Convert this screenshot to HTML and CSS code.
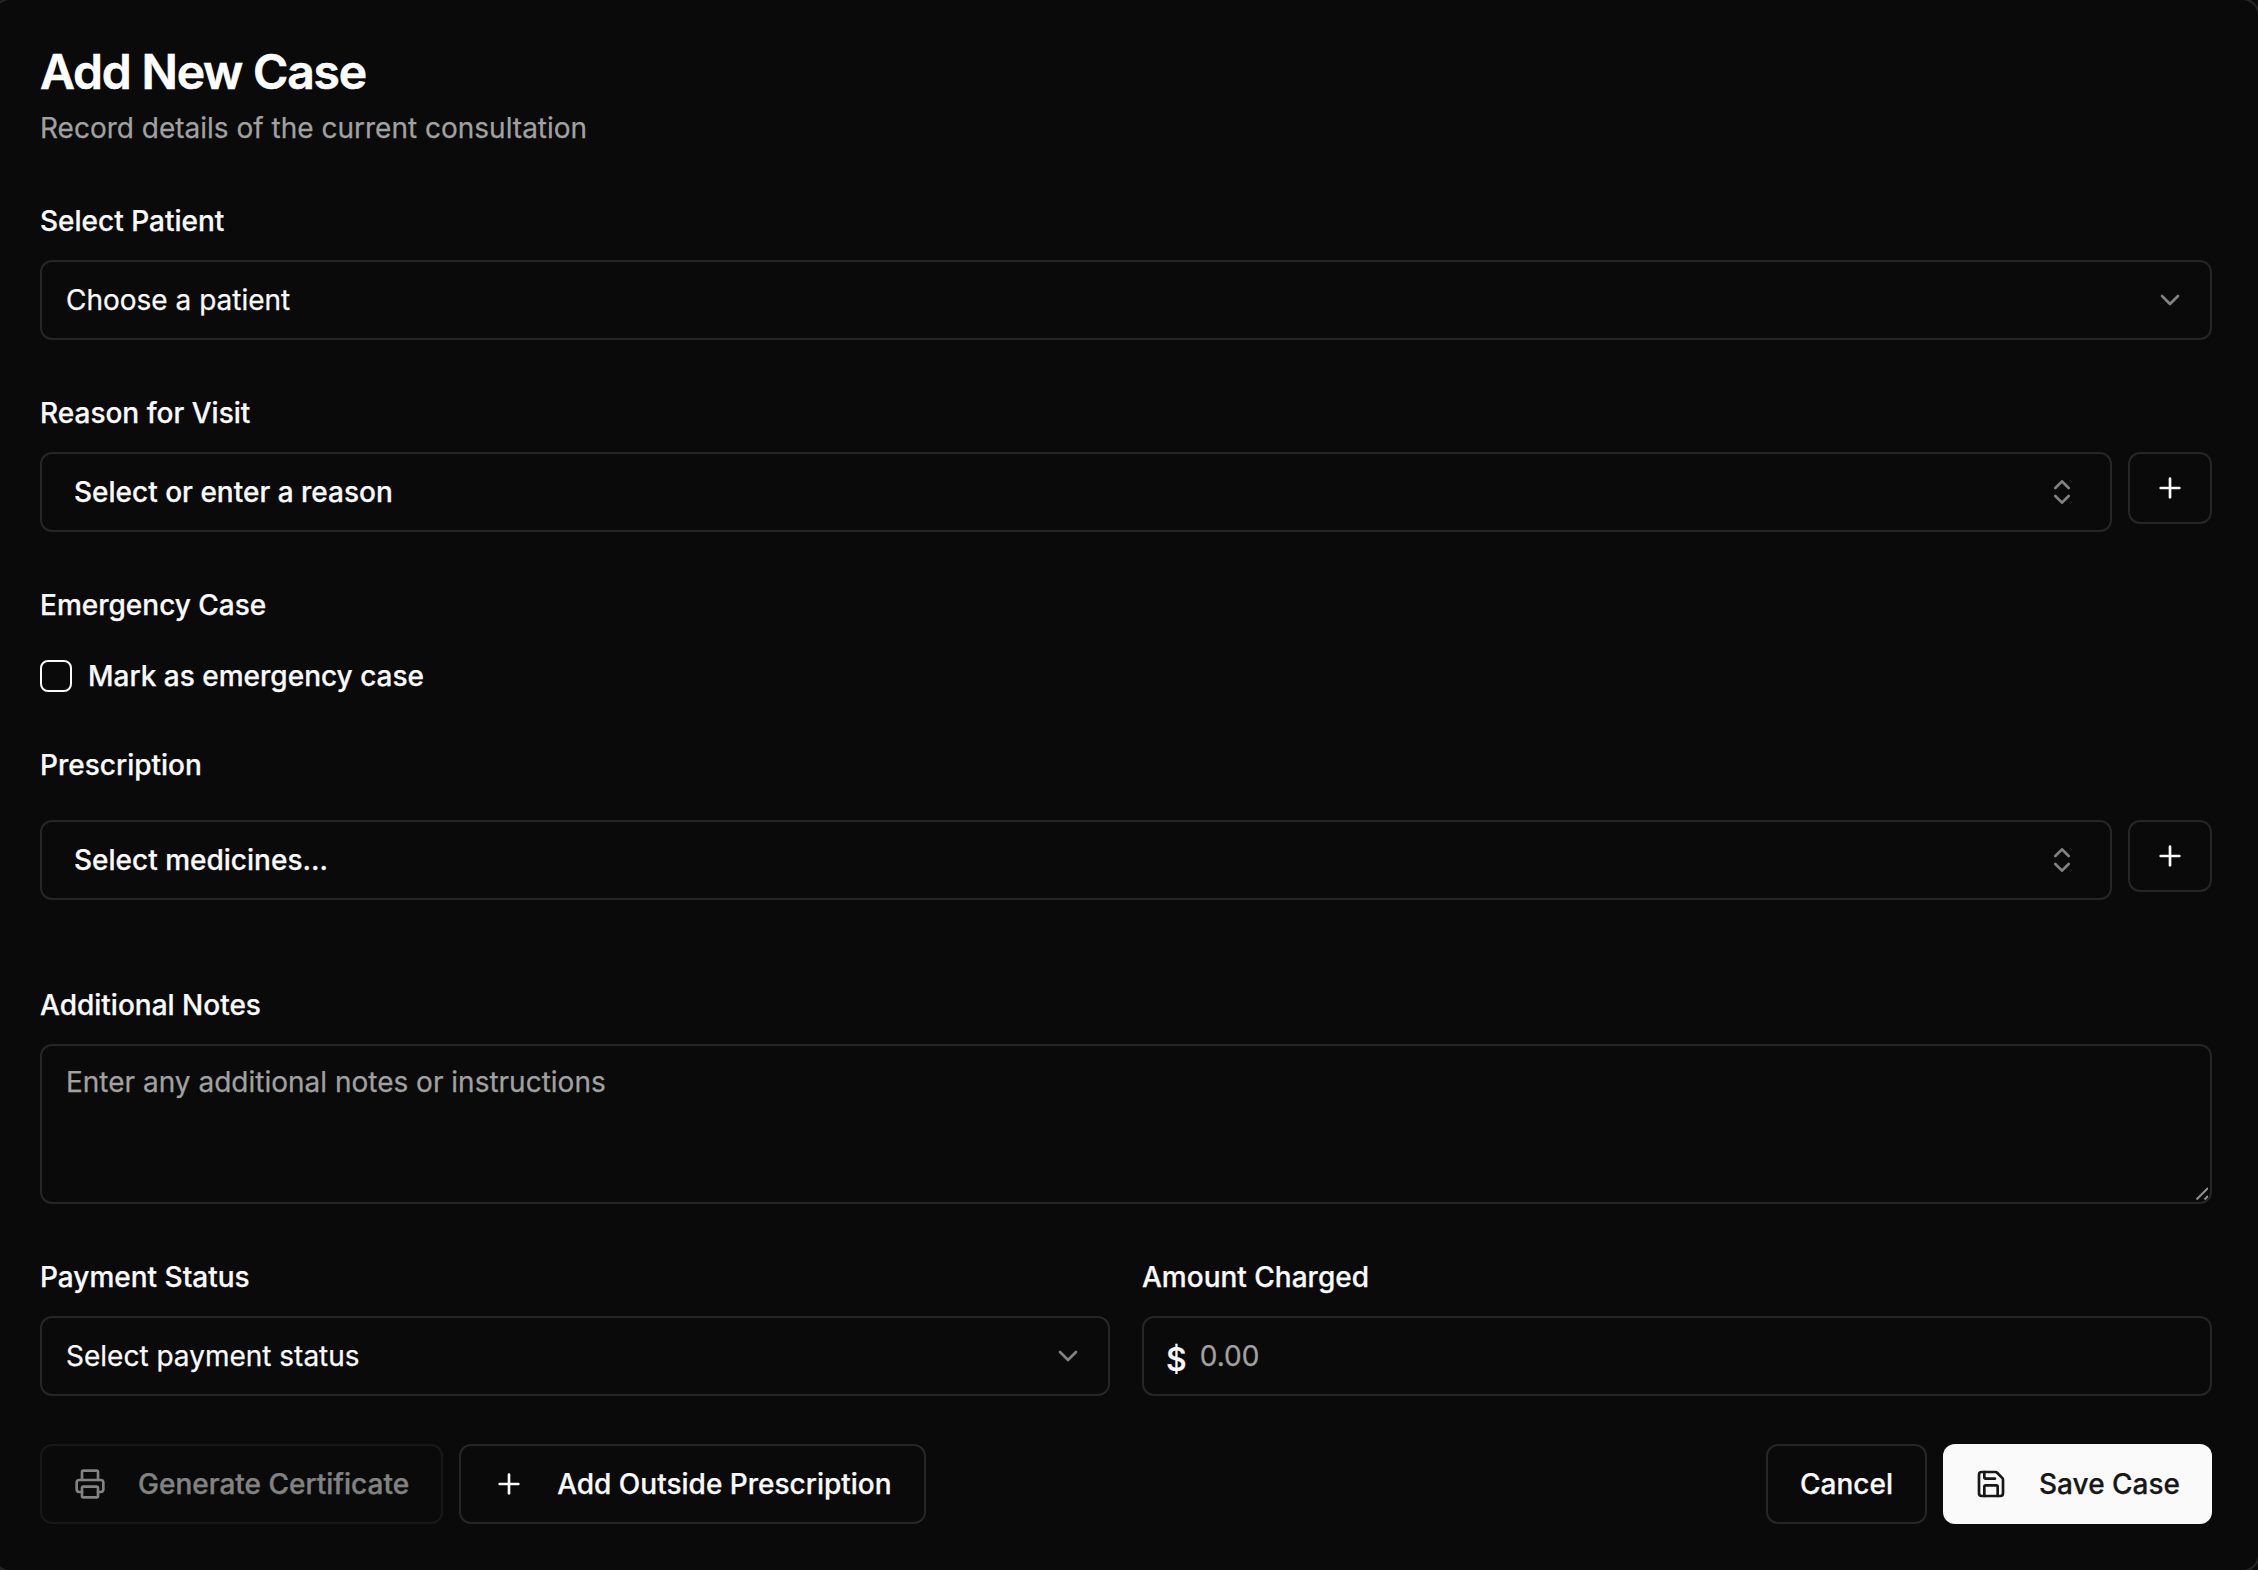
FILE: index.html
```html
<!DOCTYPE html>
<html lang="en">
<head>
<meta charset="utf-8">
<title>Add New Case</title>
<link rel="stylesheet" href="styles.css">
</head>
<body>
<main class="dialog">
  <header class="head">
    <h1 class="title">Add New Case</h1>
    <p class="subtitle">Record details of the current consultation</p>
  </header>
  <form class="form">
    <div class="field">
      <label class="label">Select Patient</label>
      <div class="select">
        <span>Choose a patient</span>
        <svg class="icon dim" viewBox="0 0 24 24"><path d="m6 9 6 6 6-6"/></svg>
      </div>
    </div>
    <div class="field">
      <label class="label">Reason for Visit</label>
      <div class="combo-row">
        <div class="combo">
          <span>Select or enter a reason</span>
          <svg class="icon dim" viewBox="0 0 24 24"><path d="m7 15 5 5 5-5"/><path d="m7 9 5-5 5 5"/></svg>
        </div>
        <button type="button" class="add"><svg class="icon" viewBox="0 0 24 24"><path d="M5 12h14"/><path d="M12 5v14"/></svg></button>
      </div>
    </div>
    <div class="field">
      <label class="label">Emergency Case</label>
      <div class="check-row">
        <span class="checkbox"></span>
        <span class="check-text">Mark as emergency case</span>
      </div>
    </div>
    <div class="field field-rx">
      <label class="label">Prescription</label>
      <div class="combo-row">
        <div class="combo">
          <span>Select medicines...</span>
          <svg class="icon dim" viewBox="0 0 24 24"><path d="m7 15 5 5 5-5"/><path d="m7 9 5-5 5 5"/></svg>
        </div>
        <button type="button" class="add"><svg class="icon" viewBox="0 0 24 24"><path d="M5 12h14"/><path d="M12 5v14"/></svg></button>
      </div>
    </div>
    <div class="field field-notes">
      <label class="label">Additional Notes</label>
      <div class="notes-wrap">
        <textarea class="notes" placeholder="Enter any additional notes or instructions"></textarea>
        <svg class="grip" viewBox="0 0 12 13"><path d="M.5 12.5 12 1"/><path d="M8.5 12.5 12 9"/></svg>
      </div>
    </div>
    <div class="two-col">
      <div class="field">
        <label class="label">Payment Status</label>
        <div class="select">
          <span>Select payment status</span>
          <svg class="icon dim" viewBox="0 0 24 24"><path d="m6 9 6 6 6-6"/></svg>
        </div>
      </div>
      <div class="field">
        <label class="label">Amount Charged</label>
        <div class="amount">
          <span class="currency">$</span>
          <span class="placeholder">0.00</span>
        </div>
      </div>
    </div>
    <footer class="actions">
      <div class="action-group">
        <button type="button" class="btn disabled">
          <svg class="icon" viewBox="0 0 24 24"><path d="M6 18H4a2 2 0 0 1-2-2v-5a2 2 0 0 1 2-2h16a2 2 0 0 1 2 2v5a2 2 0 0 1-2 2h-2"/><path d="M6 9V3a1 1 0 0 1 1-1h10a1 1 0 0 1 1 1v6"/><rect x="6" y="14" width="12" height="8" rx="1"/></svg>
          Generate Certificate
        </button>
        <button type="button" class="btn">
          <svg class="icon" viewBox="0 0 24 24"><path d="M5 12h14"/><path d="M12 5v14"/></svg>
          Add Outside Prescription
        </button>
      </div>
      <div class="action-group">
        <button type="button" class="btn">Cancel</button>
        <button type="button" class="btn primary">
          <svg class="icon" viewBox="0 0 24 24"><path d="M15.2 3a2 2 0 0 1 1.4.6l3.8 3.8a2 2 0 0 1 .6 1.4V19a2 2 0 0 1-2 2H5a2 2 0 0 1-2-2V5a2 2 0 0 1 2-2z"/><path d="M17 21v-7a1 1 0 0 0-1-1H8a1 1 0 0 0-1 1v7"/><path d="M7 3v4a1 1 0 0 0 1 1h7"/></svg>
          Save Case
        </button>
      </div>
    </footer>
  </form>
</main>
</body>
</html>
```
FILE: styles.css
```css
* { box-sizing: border-box; }
html, body { margin: 0; height: 100%; background: #0a0a0a; overflow: hidden; }
body {
  font-family: Inter, "Noto Sans", sans-serif;
  color: #fafafa;
  font-size: 28px;
  line-height: 40px;
  -webkit-text-stroke: 0.25px currentColor;
}
/* dialog edge: only its right-hand corners reach into the frame */
body::after {
  content: "";
  position: fixed;
  inset: -2px -2px -2px -8px;
  border: 2px solid #262626;
  border-radius: 18px;
  pointer-events: none;
}
.dialog { padding: 40px 46px 46px 40px; }
.title {
  margin: 0;
  font-size: 48px;
  line-height: 64px;
  font-weight: 600;
  letter-spacing: -1.2px;
  color: #fff;
  -webkit-text-stroke: 0.6px currentColor;
}
.subtitle { margin: 4px 0 0; color: #a1a1a1; }
.form { display: flex; flex-direction: column; gap: 58px; margin-top: 58px; }
.field { display: flex; flex-direction: column; gap: 24px; }
.field-rx { gap: 40px; }
.field-notes { margin-top: 32px; }
.label { font-weight: 500; line-height: 30px; color: #fafafa; }
.icon {
  width: 32px;
  height: 32px;
  flex: none;
  fill: none;
  stroke: currentColor;
  stroke-width: 2;
  stroke-linecap: round;
  stroke-linejoin: round;
}
.dim { opacity: .5; }
.select, .combo, .amount {
  height: 80px;
  display: flex;
  align-items: center;
  border: 2px solid #262626;
  border-radius: 12px;
}
.select { justify-content: space-between; padding: 0 24px; }
.combo {
  flex: 1;
  justify-content: space-between;
  padding: 0 32px;
  font-weight: 500;
}
.combo-row { display: flex; gap: 16px; align-items: flex-start; }
.add {
  width: 84px;
  height: 72px;
  display: flex;
  align-items: center;
  justify-content: center;
  padding: 0;
  background: #0a0a0a;
  border: 2px solid #262626;
  border-radius: 12px;
  color: #fafafa;
}
.check-row {
  display: flex;
  align-items: center;
  gap: 16px;
  margin-top: 16px;
  font-weight: 500;
  line-height: 32px;
}
.checkbox {
  width: 32px;
  height: 32px;
  border: 2px solid #fafafa;
  border-radius: 8px;
}
.notes-wrap { position: relative; }
.notes {
  display: block;
  width: 100%;
  height: 160px;
  padding: 16px 24px;
  background: transparent;
  border: 2px solid #262626;
  border-radius: 12px;
  color: #fafafa;
  font: 400 28px/40px Inter, "Noto Sans", sans-serif;
  -webkit-text-stroke: 0.25px #a1a1a1;
  outline: none;
  resize: none;
}
.notes::placeholder { color: #a1a1a1; opacity: 1; }
.grip {
  position: absolute;
  right: 4px;
  bottom: 4px;
  width: 12px;
  height: 13px;
  fill: none;
  stroke: #8f8f8f;
  stroke-width: 2;
}
.two-col { display: grid; grid-template-columns: 1fr 1fr; gap: 32px; }
.amount { padding: 0 22px; gap: 13px; }
.currency { font-size: 32px; font-weight: 500; position: relative; top: 4px; }
.placeholder { color: #a1a1a1; }
.subtitle, .placeholder { -webkit-text-stroke-color: #a1a1a1; }
.actions { display: flex; justify-content: space-between; margin-top: -10px; }
.action-group { display: flex; gap: 16px; }
.btn {
  height: 80px;
  display: flex;
  align-items: center;
  gap: 32px;
  padding: 0 32px;
  background: #0a0a0a;
  border: 2px solid #262626;
  border-radius: 12px;
  color: #fafafa;
  font: 500 28px/40px Inter, "Noto Sans", sans-serif;
}
.disabled { opacity: .5; }
.primary { background: #fafafa; border: 0; color: #171717; }
```
